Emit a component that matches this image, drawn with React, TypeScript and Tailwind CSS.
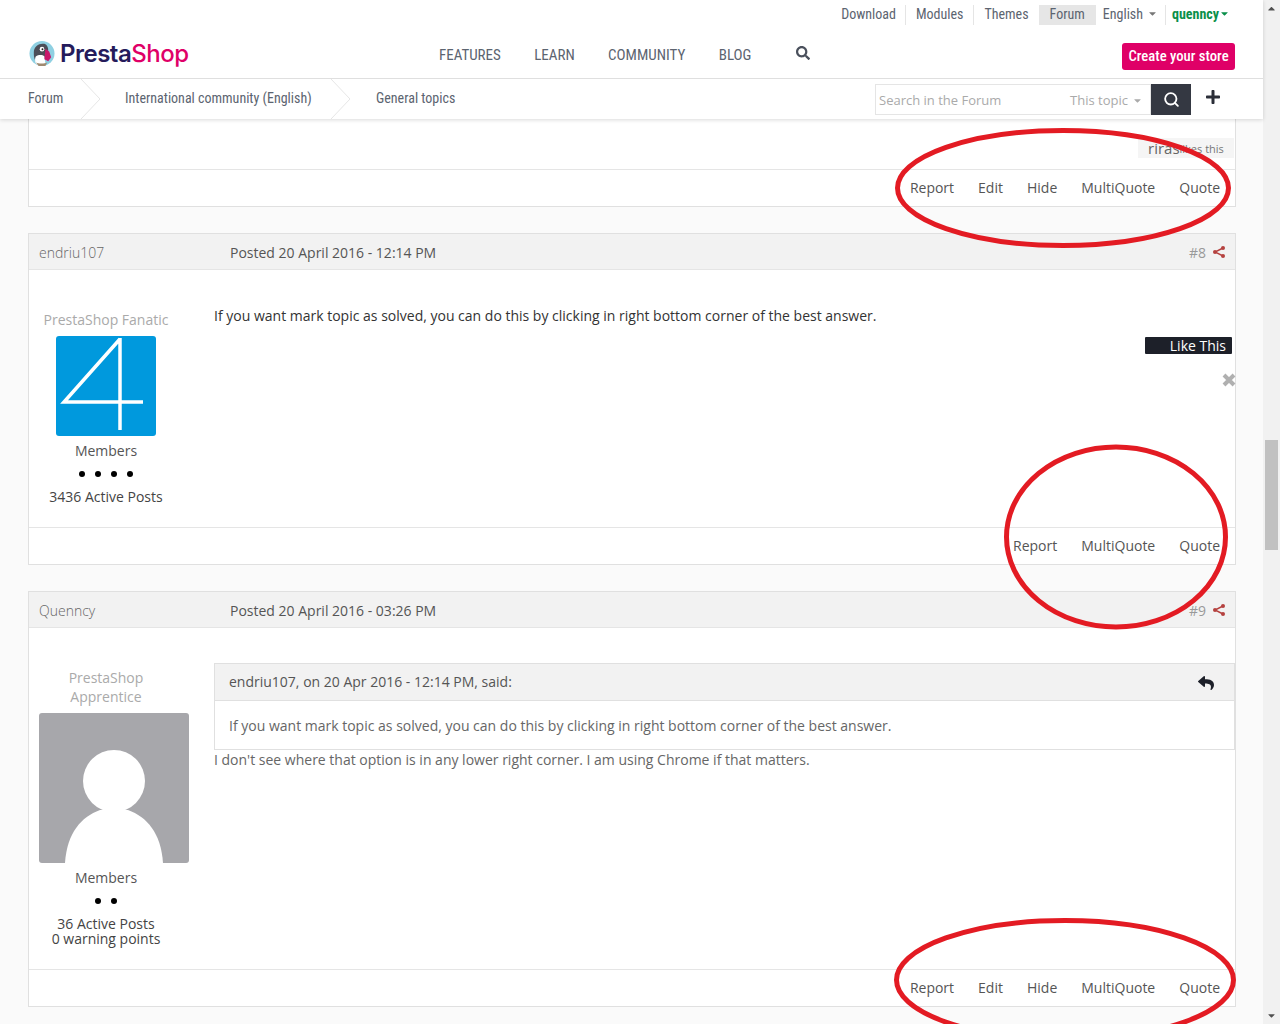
import { FaSearch, FaPlus, FaCaretDown, FaCaretUp, FaReply } from "react-icons/fa";
import { Search } from "lucide-react";

const cond = "font-['Roboto_Condensed','Roboto',sans-serif] [font-stretch:75%]";

function Logo() {
  return (
    <div className="flex items-center gap-[5px]">
      <svg width="26" height="27" viewBox="0 0 27 28">
        <circle cx="13.5" cy="14" r="13" fill="#8fd0e2" />
        <path d="M5 13C5 6 11 3 16 4c3 1 4 4 4 7l-3 3-2 9c-2 2-6 2-8-1-2-3-2-6-2-9z" fill="#4c4e58" />
        <path d="M7 17c3-2 7-2 9 0l1 7c-3 3-7 3-10 0-1-3-1-4 0-7z" fill="#fff" />
        <circle cx="13.5" cy="9.5" r="2.4" fill="#fff" />
        <circle cx="14" cy="9.5" r="1" fill="#222" />
        <path d="M17 9l4 3 2 6-3 4-4-2z" fill="#c9186a" />
        <path d="M7 23c3 2 9 2 12 0l-2 4H10z" fill="#a08a70" />
      </svg>
      <span className="font-['Inter',sans-serif] text-[24px] font-semibold leading-none tracking-[-0.5px] text-[#251b5b]">
        Presta<span className="font-medium text-[#df0067]">Shop</span>
      </span>
    </div>
  );
}

function Chevron() {
  return (
    <svg width="22" height="40" viewBox="0 0 22 40" className="shrink-0">
      <path d="M1 0L20 20L1 40" fill="none" stroke="#e6e6e6" />
    </svg>
  );
}

function ShareIcon() {
  return (
    <svg width="14" height="14" viewBox="0 0 14 14" className="shrink-0">
      <path d="M11 3L3 7L11 11" fill="none" stroke="#b5423f" strokeWidth="1.4" />
      <circle cx="11" cy="3" r="2" fill="#b5423f" />
      <circle cx="3" cy="7" r="2" fill="#b5423f" />
      <circle cx="11" cy="11" r="2" fill="#b5423f" />
    </svg>
  );
}

function Header() {
  return (
    <header className={`relative z-10 shrink-0 bg-white shadow-[0_1px_4px_rgba(0,0,0,0.15)] ${cond} text-[#5c6470]`}>
      <div className="h-[79px] border-b border-[#dfdfdf]">
        <div className="flex h-[36px] items-start justify-end pr-[33px] pt-[5px] text-[14px] leading-[18px]">
          <span className="h-[20px] border-r border-[#e5e5e5] pr-[9px]">Download</span>
          <span className="h-[20px] border-r border-[#e5e5e5] px-[10px]">Modules</span>
          <span className="h-[20px] pl-[10px] pr-[10px]">Themes</span>
          <span className="h-[20px] bg-[#e6e6e6] px-[11px]">Forum</span>
          <span className="ml-[7px] flex h-[20px] items-start gap-[4px] border-r border-[#e5e5e5] pr-[7px]">
            English <FaCaretDown className="mt-[3px] text-[11px] text-[#777]" />
          </span>
          <span className="ml-[6px] flex items-start font-bold text-[#0a8f4a]">
            quenncy <FaCaretDown className="mt-[3px] text-[11px]" />
          </span>
        </div>
        <div className="flex items-start pl-[29px] pr-[28px]">
          <div className="mt-[4px] w-[410px] shrink-0">
            <Logo />
          </div>
          <nav className="mt-[9px] flex gap-[33.4px] text-[15px] leading-[20px]">
            <span>FEATURES</span>
            <span>LEARN</span>
            <span>COMMUNITY</span>
            <span>BLOG</span>
          </nav>
          <FaSearch className="ml-[45px] mt-[10px] text-[14px] text-[#4a505c]" />
          <button className="ml-auto mt-[7px] h-[27px] w-[113px] rounded-[3px] bg-[#df0067] text-[14.7px] font-medium text-white">
            Create your store
          </button>
        </div>
      </div>
      <div className="flex h-[40px] items-center pl-[28px] text-[14px]">
        <span className="mb-[2px] w-[52px]">Forum</span>
        <Chevron />
        <span className="mb-[2px] ml-[23px] w-[205px]">International community (English)</span>
        <Chevron />
        <span className="mb-[2px] ml-[24px]">General topics</span>
        <div className="ml-auto mr-[72px] flex h-[31px] items-stretch font-['Open_Sans',sans-serif] [font-stretch:100%] text-[13px] text-[#aaaaaa]">
          <div className="flex w-[276px] items-center justify-between border border-[#e5e5e5] pl-[3px] pr-[7px] pt-[2px]">
            <span>Search in the Forum</span>
            <span className="flex items-center gap-[4px]">
              This topic <FaCaretDown className="text-[11px]" />
            </span>
          </div>
          <div className="flex w-[40px] items-center justify-center bg-[#343842] text-white">
            <Search size={17} strokeWidth={2.6} />
          </div>
        </div>
        <FaPlus className="absolute left-[1205px] top-[89px] text-[16px] text-[#2b2e38]" />
      </div>
    </header>
  );
}

function Footer({ links }: { links: string[] }) {
  return (
    <div className="flex h-[37px] items-center justify-end gap-[24px] border-t border-[#e5e5e5] pb-[2px] pr-[15px] text-[#555]">
      {links.map((l) => (
        <span key={l}>{l}</span>
      ))}
    </div>
  );
}

function Dots({ n }: { n: number }) {
  return (
    <div className="flex h-[8px] justify-center gap-[10px]">
      {Array.from({ length: n }).map((_, i) => (
        <span key={i} className="h-[6px] w-[6px] rounded-full bg-black" />
      ))}
    </div>
  );
}

function PostHead({ name, date, num }: { name: string; date: string; num: string }) {
  return (
    <div className="flex h-[36px] items-center border-b border-[#e5e5e5] bg-[#f2f2f2] pl-[10px] pr-[9px] pt-[1px]">
      <span className="w-[191px] font-light text-[#666]">{name}</span>
      <span className="text-[#555]">Posted {date}</span>
      <span className="ml-auto flex items-center gap-[6px] text-[#999]">
        {num} <ShareIcon />
      </span>
    </div>
  );
}

function Four() {
  return (
    <svg width="100" height="100" viewBox="0 0 100 100" className="block rounded-[3px] bg-[#0099dd]">
      <path d="M64 2V94M64 3L8 66H87" fill="none" stroke="#fff" strokeWidth="3.5" />
    </svg>
  );
}

function Silhouette() {
  return (
    <svg width="150" height="150" viewBox="0 0 150 150" className="block rounded-[3px] bg-[#a7a7ab]">
      <circle cx="75" cy="68" r="31" fill="#fff" />
      <path d="M26 150C28 120 42 104 61 97H89C108 104 122 120 124 150Z" fill="#fff" />
    </svg>
  );
}

function App() {
  return (
    <div className="relative flex h-[1024px] w-[1280px] overflow-hidden bg-[#fafafa] font-['Open_Sans',sans-serif] text-[14px] leading-[19px]">
      <div className="flex w-[1263px] shrink-0 flex-col">
        <Header />
        <main className="flex flex-col gap-[26px] pl-[28px] pr-[27px]">
          <section className="border-x border-b border-[#e0e0e0] bg-white">
            <div className="flex h-[50px] items-start justify-end pr-[1px] pt-[19px]">
              <div className="flex h-[20px] w-[96px] items-center bg-[#f5f5f5] pl-[10px] text-[#666]">
                <span className="text-[15px]">riras</span>
                <span className="pt-[1px] text-[11px] text-[#777]">likes this</span>
              </div>
            </div>
            <Footer links={["Report", "Edit", "Hide", "MultiQuote", "Quote"]} />
          </section>

          <section className="border border-[#e0e0e0] bg-white">
            <PostHead name="endriu107" date="20 April 2016 - 12:14 PM" num="#8" />
            <div className="flex h-[257px]">
              <div className="flex w-[154px] shrink-0 flex-col items-center pt-[40px] text-[#555]">
                <span className="text-[#aaa]">PrestaShop Fanatic</span>
                <div className="mt-[7px]"><Four /></div>
                <span className="mt-[5px]">Members</span>
                <div className="mt-[11px]"><Dots n={4} /></div>
                <span className="mt-[8px] text-[#444]">3436 Active Posts</span>
              </div>
              <div className="ml-[31px] flex min-w-0 flex-1 flex-col items-end pt-[36px]">
                <p className="w-full text-[#333]">If you want mark topic as solved, you can do this by clicking in right bottom corner of the best answer.</p>
                <span className="mr-[3px] mt-[12px] flex h-[17px] w-[87px] items-center justify-end rounded-[1px] bg-[#1d2029] pr-[6px] text-white">Like This</span>
                <svg width="14" height="14" viewBox="0 0 14 14" className="mr-[-1px] mt-[19px]">
                  <path d="M2 2L12 12M12 2L2 12" stroke="#b0b0b0" strokeWidth="4" />
                </svg>
              </div>
            </div>
            <Footer links={["Report", "MultiQuote", "Quote"]} />
          </section>

          <section className="border border-[#e0e0e0] bg-white">
            <PostHead name="Quenncy" date="20 April 2016 - 03:26 PM" num="#9" />
            <div className="flex h-[341px]">
              <div className="ml-[10px] flex w-[134px] shrink-0 flex-col items-center pt-[40px] text-[#555]">
                <span className="text-center text-[#aaa]">PrestaShop<br />Apprentice</span>
                <div className="mt-[7px] w-[150px] shrink-0 self-start"><Silhouette /></div>
                <span className="mt-[5px]">Members</span>
                <div className="mt-[11px]"><Dots n={2} /></div>
                <span className="mt-[10px] text-center leading-[15px] text-[#444]">36 Active Posts<br />0 warning points</span>
              </div>
              <div className="ml-[41px] flex min-w-0 flex-1 flex-col pt-[35px] text-[#666]">
                <div className="border border-[#e0e0e0]">
                  <div className="flex h-[37px] items-center justify-between border-b border-[#e0e0e0] bg-[#f2f2f2] pl-[14px] pr-[20px] text-[#555]">
                    <span className="mb-[1px]">endriu107, on 20 Apr 2016 - 12:14 PM, said:</span>
                    <FaReply className="mt-[1px] text-[16px] text-[#1d2029]" />
                  </div>
                  <p className="flex h-[48px] items-center pl-[14px]">If you want mark topic as solved, you can do this by clicking in right bottom corner of the best answer.</p>
                </div>
                <p>I don't see where that option is in any lower right corner. I am using Chrome if that matters.</p>
              </div>
            </div>
            <Footer links={["Report", "Edit", "Hide", "MultiQuote", "Quote"]} />
          </section>
        </main>
      </div>

      <div className="flex w-[17px] shrink-0 flex-col items-center justify-between bg-[#f1f1f1]">
        <FaCaretUp className="mt-[3px] text-[11px] text-[#505050]" />
        <FaCaretDown className="mb-[3px] text-[11px] text-[#505050]" />
      </div>
      <div className="absolute left-[1265px] top-[440px] h-[110px] w-[13px] bg-[#c1c1c1]" />

      <svg className="pointer-events-none absolute left-0 top-0 z-20" width="1280" height="1024" viewBox="0 0 1280 1024">
        <g fill="none" stroke="#e31b23" strokeWidth="5">
          <ellipse cx="1063" cy="188" rx="165.5" ry="57.5" />
          <ellipse cx="1116" cy="537" rx="109.5" ry="90" />
          <ellipse cx="1065" cy="980" rx="168.5" ry="59.5" />
        </g>
      </svg>
    </div>
  );
}

export default App;
